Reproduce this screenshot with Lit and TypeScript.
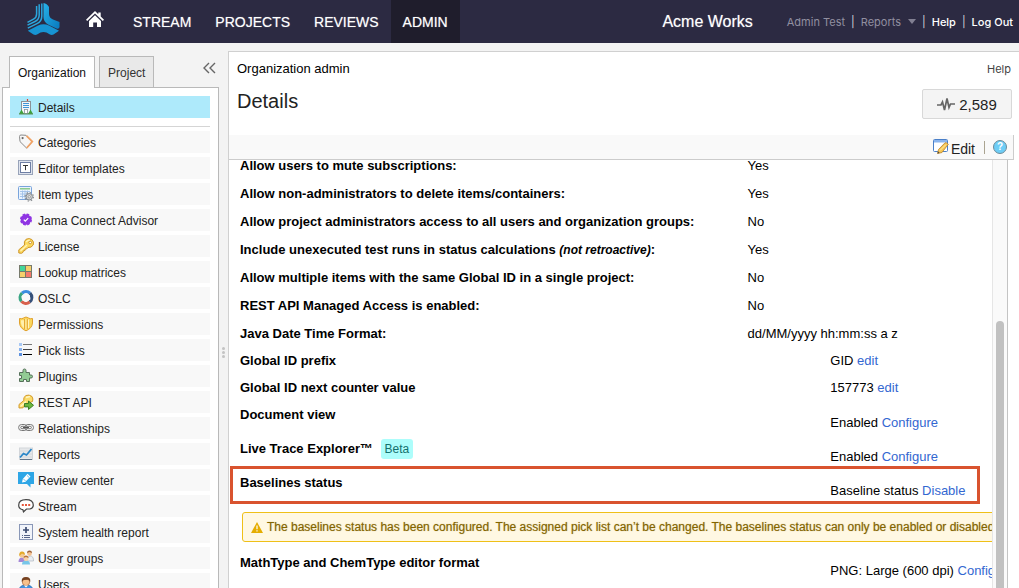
import { LitElement, html, svg, css, nothing } from "lit";
import type { SVGTemplateResult, TemplateResult } from "lit";
import { customElement, property, state } from "lit/decorators.js";
import { classMap } from "lit/directives/class-map.js";

const icons: Record<string, SVGTemplateResult> = {
  details: svg`
    <path d="M9.500 0v2" stroke="#e03c2c" stroke-width="1.200"/>
    <rect x="3.500" y="2.500" width="9" height="12" fill="#f4f6f8" stroke="#8b9299"/>
    <path d="M5 4.500h6M5 6.500h6M5 8.500h6" stroke="#3f95d8"/>
    <rect x="6.500" y="10.500" width="3" height="4" fill="#fff" stroke="#8b9299" stroke-width=".8"/>
    <path d="M1 15l2.500-4.500L6 15zM10 15l2.500-4.500L15 15z" fill="#3ea23c"/>
    <path d="M1 15h14" stroke="#5a8f57"/>`,
  categories: svg`
    <path d="M1.500 2.500Q1.500 1 3 1L8 1.300 14.300 7.600 8.700 14.200 2 7.600z" fill="#f7f7f7" stroke="#8c8c8c"/>
    <path d="M8.600 1.800L14.300 7.600 8.700 14" fill="none" stroke="#f0a366" stroke-width="1.800"/>
    <circle cx="4.600" cy="4.100" r="1.100" fill="#666"/>`,
  templates: svg`
    <rect x=".5" y=".5" width="14" height="14" fill="#dfe4ee" stroke="#98a3b9"/>
    <rect x="2.500" y="2.500" width="10" height="10" fill="#fff" stroke="#6f7fa4"/>
    <path d="M5 5.500h5M7.500 5v5.200" stroke="#333" stroke-width="1"/>`,
  types: svg`
    <rect x=".5" y=".5" width="13" height="13" rx="1" fill="#eaf3fd" stroke="#79a4dc"/>
    <path d="M2 2.800h10" stroke="#7cc47c" stroke-width="1.300"/>
    <path d="M2 5.500h10M2 8h10M2 10.500h10M4.500 4.500v8M7 4.500v8M9.500 4.500v8" stroke="#9fc0e8" stroke-width=".9"/>
    <circle cx="11.200" cy="10.800" r="3.200" fill="#d5d8db" stroke="#85898d"/>
    <circle cx="11.200" cy="10.800" r="4.200" fill="none" stroke="#85898d" stroke-width="1.200" stroke-dasharray="1.500 1.800"/>
    <circle cx="11.200" cy="10.800" r="1.200" fill="#fff" stroke="#777" stroke-width=".7"/>`,
  advisor: svg`
    <circle cx="8" cy="7.500" r="5.200" fill="#8f35e3"/>
    <circle cx="8" cy="7.500" r="5.200" fill="none" stroke="#8f35e3" stroke-width="1.700" stroke-dasharray="2.600 1.480"/>
    <path d="M5.800 7.700l1.500 1.500 2.900-3" fill="none" stroke="#fff" stroke-width="1.200"/>`,
  license: svg`
    <path d="M.8 15V11.800L6.500 7Q5.500 3.500 8 1.300 11 -.2 13.800 1.500 16.500 4 15.200 7 13.300 10 10 9.500L8.600 11 7.200 11 7 12.500 5.500 12.700 5 14.300 3.500 15.300z" fill="#fbd95e" stroke="#cf962a"/>
    <path d="M2.500 13L9 7M8.200 4Q9.500 2 12 2.200" fill="none" stroke="#fff3b8" stroke-width="1.300"/>
    <circle cx="12.200" cy="4.500" r="1.300" fill="#fff" stroke="#bd8420" stroke-width=".8"/>`,
  matrices: svg`
    <rect x="1" y="1" width="13" height="13" fill="#777a6c"/>
    <path d="M2 2h5v5H2z" fill="#42d69b"/><path d="M8 2h5v5h-5zM2 8h5v5H2z" fill="#f5d06b"/>
    <path d="M8 8h5v5h-5z" fill="#f47a6c"/>`,
  oslc: svg`
    <g fill="none" stroke-width="3.200">
    <path d="M4 3.200A6 6 0 0 1 12 3.200" stroke="#3b8de0"/>
    <path d="M12 3.200A6 6 0 0 1 11.600 12.100" stroke="#355079"/>
    <path d="M11.600 12.100A6 6 0 0 1 3.400 11.300" stroke="#d8604d"/>
    <path d="M3.400 11.300A6 6 0 0 1 4 3.200" stroke="#38a583"/></g>
    <path d="M8 3.200l3.700 2 .8 4L8.500 12l-4-1.500L3.500 6z" fill="#f9f9f9"/>`,
  permissions: svg`
    <path d="M1.500 2.500Q4 3.200 5.500 2L8 1l2.500 1Q12 3.200 14.500 2.500V7Q14 12.500 8 14.800 2 12.500 1.500 7z" fill="#fbd65b" stroke="#e0a12c"/>
    <path d="M3 4.200h3V12Q3 10 3 6z" fill="#fff0ae"/><path d="M8 3v10.500M10.500 3.500v8.500" stroke="#fff3bf"/>
    <path d="M9.300 3v10M6.500 3v10" stroke="#df9e2b" stroke-width=".8"/>`,
  lists: svg`
    <path d="M1 1h3v3H1z" fill="#a9c9f5"/><path d="M1 6h3v3H1z" fill="#86b1ef"/><path d="M1 11h3v3H1z" fill="#5d91e0"/>
    <path d="M5 2.500h9" stroke="#777"/><path d="M5 7.500h9" stroke="#444"/><path d="M5 12.500h9" stroke="#000"/>`,
  plugins: svg`
    <path d="M1.500 4.500H5V2.500Q5 1 6.500 1T8 2.500V4.500H11.500V7H13Q14.500 7 14.500 8.500T13 10H11.500V13.500H8.500V11.500H5.500V13.500H1.500V10.500H3.500V7.500H1.500z" fill="#92cc94" stroke="#56705a"/>`,
  rest: svg`
    <path d="M1 14V10.500L5.800 6.500Q5 3 8 1.500 11 .2 14 2.500 15.500 5 14.500 7.500L8 10 5 13.800z" fill="#fbdc6a" stroke="#d39a2c"/>
    <path d="M8 3.500l4-1M2.500 12.500L8 7.500" stroke="#fff5c4" stroke-width="1.300"/>
    <path d="M6.500 9.500h4V7l5 4.300-5 4.200v-2.600h-4z" fill="#6cb83d" stroke="#3c7d25"/>`,
  relations: svg`
    <g fill="none" stroke="#777"><rect x=".6" y="4.500" width="8.500" height="6" rx="3"/><rect x="7" y="4.500" width="8.500" height="6" rx="3"/>
    <rect x="2.700" y="6.300" width="4.500" height="2.400" rx="1.200"/><rect x="8.900" y="6.300" width="4.500" height="2.400" rx="1.200"/>
    <path d="M5 7.500h6" stroke="#555"/></g>`,
  reports: svg`
    <rect x="1.500" y="2" width="13" height="11.500" fill="#e6e8ea" stroke="#d2d5d9"/>
    <path d="M2 5h12M2 8h12M2 11h12" stroke="#d0d3d7" stroke-width=".8"/>
    <path d="M2 11.500l3.500-4L8.500 9 13.500 3" fill="none" stroke="#2a86c8" stroke-width="1.800"/>
    <path d="M2 13.500h12" stroke="#61758a"/>`,
  review: svg`
    <path d="M0 0h16v12h-3.500v3.500L9 12H0z" fill="#2ea6e6"/>
    <path d="M4 10.500l.8-3.500L9.500 1.800l3 2.700L7.500 9.800z" fill="#fff"/><path d="M5.500 7l2 2M9 3.500l2.200 2" stroke="#2ea6e6" stroke-width=".7"/>`,
  stream: svg`
    <path d="M4 11.500Q.7 10.500.7 7.200.7 1.700 8 1.700T15.300 7.200Q15.300 10 12 11H8.500L5.500 13.800 4.800 11.500z" fill="#fff" stroke="#444" stroke-width="1.200"/>
    <path d="M3.800 6h2v2h-2zM7 6h2v2H7zM10.200 6h2v2h-2z" fill="#e4573d"/>`,
  health: svg`
    <rect x="1.500" y=".5" width="13" height="15" fill="#f1f4fa" stroke="#8997b7"/>
    <path d="M8 3v6M5 6h6" stroke="#3d4c72" stroke-width="1.700"/>
    <path d="M4 11.500h1M6 11.500h6M4 13.500h1M6 13.500h6" stroke="#566488"/>`,
  groups: svg`
    <path d="M.5 12Q.5 7.500 4 7.500T7.500 12z" fill="#a487d6"/><circle cx="4" cy="5" r="2.600" fill="#f5c98f"/><path d="M1.300 6Q.8 1.500 4 1.500T6.800 5L4 3.500z" fill="#e3a928"/>
    <path d="M9 10Q9 6 12.300 6T15.500 11H9z" fill="#e8edf2" stroke="#a5adb5" stroke-width=".6"/><circle cx="11.500" cy="3.500" r="2.400" fill="#f3c191"/><path d="M9 3Q9 .5 11.500.5T14 3L11.500 2z" fill="#99623b"/>
    <path d="M4 14.500Q4 10.500 8 10.500T12 14.500z" fill="#78c6e8"/><circle cx="8" cy="8.500" r="2.500" fill="#f8d0a5"/><path d="M5.500 8Q5.500 5.500 8 5.500T10.500 8L8 7z" fill="#b5713a"/>`,
  users: svg`
    <path d="M1 15Q1 9 8 9T15 15z" fill="#3f93e0" stroke="#2669b5" stroke-width=".8"/>
    <circle cx="8" cy="6" r="3.700" fill="#f6c08b" stroke="#a8653a" stroke-width=".7"/>
    <path d="M3.800 6Q3 1 8 1T12.200 6L10.500 3.800 5.500 4z" fill="#75401f"/><path d="M6 9.500l2 2 2-2z" fill="#fff"/>`,
};

interface NavEntry { icon: string; label: string; }

const navEntries: NavEntry[] = [
  { icon: "categories", label: "Categories" },
  { icon: "templates", label: "Editor templates" },
  { icon: "types", label: "Item types" },
  { icon: "advisor", label: "Jama Connect Advisor" },
  { icon: "license", label: "License" },
  { icon: "matrices", label: "Lookup matrices" },
  { icon: "oslc", label: "OSLC" },
  { icon: "permissions", label: "Permissions" },
  { icon: "lists", label: "Pick lists" },
  { icon: "plugins", label: "Plugins" },
  { icon: "rest", label: "REST API" },
  { icon: "relations", label: "Relationships" },
  { icon: "reports", label: "Reports" },
  { icon: "review", label: "Review center" },
  { icon: "stream", label: "Stream" },
  { icon: "health", label: "System health report" },
  { icon: "groups", label: "User groups" },
  { icon: "users", label: "Users" },
];

@customElement("app-header")
class AppHeader extends LitElement {
  static styles = css`
    :host { display: block; flex: none; font-family: "Liberation Sans", Arial, sans-serif; }
    .bar { display: flex; align-items: center; height: 43px; padding: 0 6px 0 27px; background: #2c2a42; color: #fff; }
    a { color: inherit; text-decoration: none; }
    .logo, .home { display: block; flex: none; }
    .home { margin: 0 17px 0 26px; }
    .menu { display: flex; align-self: stretch; }
    .menu a { display: flex; align-items: center; padding: 0 12px; font-size: 14px; text-shadow: 0 0 1px #ffffff80; }
    .menu .active { background: #1f1d2c; }
    .org { margin-left: auto; font-size: 16px; text-shadow: 0 0 1px #ffffff80; white-space: nowrap; }
    .user { display: flex; align-items: center; gap: 6px; margin-left: 34px; font: 11px Inter, sans-serif; white-space: nowrap; }
    .muted { color: #918fa0; }
    .sep { color: #d5d4dc; }
    .reports { display: flex; align-items: center; gap: 7px; padding: 0; border: 0; background: none; font: inherit; }
    .strong { font-weight: 500; }
  `;

  render() {
    return html`<header class="bar">
      <a class="logo" href="#" aria-label="Jama home">
        <svg width="33" height="33" viewBox="0 0 33 33">
          <defs><linearGradient id="g" x1="0" y1="0" x2="1" y2="1"><stop offset="0" stop-color="#27b2e8"/><stop offset="1" stop-color="#0878bd"/></linearGradient></defs>
          <path d="M16.500 0Q20 .5 22 4V11Q22.200 15 26 16.500L32.500 19V24Q32 26.500 29.500 25.500L21 21.500Q16.500 19 16.500 14z" fill="url(#g)"/>
          <g fill="none" stroke="#2ba6dc" stroke-width="1.500">
            <path d="M14.800 .5V13Q14.800 18.500 10 20.600L.8 25.200"/>
            <path d="M12.200 1.300V12Q12.200 16.500 8 18.500L.5 22.200"/>
            <path d="M9.600 3V11Q9.600 14.500 6.500 16.200L.5 19.400"/>
          </g>
          <path d="M.8 27.800L11 22.500Q16.500 20 22 22.500L32 27.800 26.500 31.500Q24.500 32.500 22.500 31.200 16.500 27 10.500 31.200 8.500 32.500 6.500 31.500z" fill="#1794d3"/>
        </svg>
      </a>
      <a class="home" href="#" aria-label="Home">
        <svg width="18" height="17" viewBox="0 0 18 17" fill="#fff"><path d="M9 0l3.300 3.200V1.500h2.400V5.500L18 8.700l-1.200 1.300L9 2.600 1.200 10 0 8.700z"/><path d="M9 4.200l6 5.800v6h-4v-4.500H7.200V16H3v-6z"/></svg>
      </a>
      <nav class="menu">
        <a href="#">STREAM</a><a href="#">PROJECTS</a><a href="#">REVIEWS</a><a href="#" class="active" aria-current="page">ADMIN</a>
      </nav>
      <span class="org">Acme Works</span>
      <div class="user">
        <a class="muted" href="#">Admin Test</a><span class="sep">|</span>
        <button class="reports muted">Reports <svg width="8" height="5" viewBox="0 0 8 5"><path d="M0 0h8L4 5z" fill="#817f92"/></svg></button>
        <span class="sep">|</span><a class="strong" href="#">Help</a><span class="sep">|</span><a class="strong" href="#">Log Out</a>
      </div>
    </header>`;
  }
}

@customElement("admin-sidebar")
class AdminSidebar extends LitElement {
  @state() private selected = "Details";

  static styles = css`
    :host { display: flex; flex-direction: column; flex: none; width: 217px; padding: 13px 0 0 2px; box-sizing: content-box; font: 12px "Liberation Sans", Arial, sans-serif; }
    .tabs { display: flex; gap: 4px; padding-left: 7px; position: relative; z-index: 1; }
    .tab { height: 31px; padding: 2px 8px 0; border: 1px solid #b9b9b9; border-bottom: 0; background: #e9e9e9; color: #333; font: inherit; }
    .tab.on { height: 32px; margin-bottom: -1px; padding-top: 0; background: #fff; color: #111; }
    .collapse { width: 14px; height: 14px; margin: 5px 3px 0 auto; padding: 0; border: 0; background: none; line-height: 0; }
    .panel { flex: 1; padding: 8px 8px 0 7px; border: 1px solid #b9b9b9; background: #fff; }
    .item { display: flex; align-items: center; gap: 4px; height: 22px; padding-left: 8px; margin-bottom: 4px; background: #f8f8f8; color: #222; text-decoration: none; }
    .item.on { margin-bottom: 8px; background: #aeeafb; }
    .item svg { flex: none; }
    .text { padding-top: 2px; }
    .rule { height: 1px; margin: 0 0 4px; border: 0; background: #d5d5d5; }
  `;

  private item(e: NavEntry) {
    return html`<a href="#" class=${classMap({ item: true, on: e.label === this.selected })}>
      <svg width="16" height="16" viewBox="0 0 16 16">${icons[e.icon]}</svg><span class="text">${e.label}</span></a>`;
  }

  render() {
    return html`
      <div class="tabs">
        <button class="tab on">Organization</button><button class="tab">Project</button>
        <button class="collapse" aria-label="Collapse panel"><svg width="13" height="12" viewBox="0 0 13 12"><path d="M6 1L1 6l5 5M12 1L7 6l5 5" fill="none" stroke="#666" stroke-width="1.400"/></svg></button>
      </div>
      <nav class="panel">
        ${this.item({ icon: "details", label: "Details" })}
        <hr class="rule" />
        <div class="list">${navEntries.map((e) => this.item(e))}</div>
      </nav>`;
  }
}

@customElement("setting-row")
class SettingRow extends LitElement {
  @property() label = "";
  @property() note = "";
  @property() value = "";
  @property() action = "";
  @property() badge = "";
  @property({ reflect: true }) kind = "plain";
  @property({ type: Boolean, reflect: true }) marked = false;

  static styles = css`
    :host { display: flex; position: relative; box-sizing: border-box; height: 28px; padding-left: 11px; align-items: center; line-height: 20px; white-space: nowrap; }
    :host([kind="inline"]) { height: 27px; padding-bottom: 2px; }
    :host([kind="staggered"]) { height: 34px; align-items: flex-start; }
    .label { flex: 0 0 67.5%; font-weight: bold; }
    :host(:not([kind="plain"])) .label { flex-basis: 78.5%; }
    :host([kind="staggered"]) .label { padding-top: 3px; }
    :host([kind="staggered"]) .value { padding-top: 11px; }
    .note { font-size: 12px; }
    a { color: #3367d1; text-decoration: none; }
    .badge { display: inline-block; margin-left: 4px; padding: 0 4px; border-radius: 3px; background: #adfdfb; color: #14706d; font-size: 12px; font-weight: normal; }
    :host([marked])::after { content: ""; position: absolute; inset: -4px 12px 0 1px; border: 3px solid #d9532f; box-sizing: border-box; pointer-events: none; }
  `;

  render() {
    return html`<div class="label">${this.label}${this.note ? html` <i class="note">(${this.note})</i>:` : nothing}
        ${this.badge ? html`<span class="badge">${this.badge}</span>` : nothing}</div>
      <div class="value">${this.value} ${this.action ? html`<a href="#">${this.action}</a>` : nothing}</div>`;
  }
}

@customElement("details-panel")
class DetailsPanel extends LitElement {
  static styles = css`
    :host { display: flex; flex-direction: column; flex: 1; min-width: 0; min-height: 0; margin-top: 8px; border: 1px solid #d0d0d0; border-width: 1px 0 0 1px; background: #fff; font: 13px "Liberation Sans", Arial, sans-serif; color: #000; }
    a { text-decoration: none; }
    .top { display: flex; justify-content: space-between; height: 83px; padding: 0 7px 0 8px; }
    .crumb { padding-top: 7px; line-height: 20px; }
    h1 { margin: 10px 0 0; font-size: 20px; font-weight: normal; line-height: 24px; color: #222; }
    .side { display: flex; flex-direction: column; align-items: flex-end; padding-top: 10px; }
    .help { font: 11px/14px Inter, sans-serif; color: #444; padding-right: 1px; }
    .activity { display: flex; align-items: center; justify-content: center; gap: 4px; width: 90px; height: 30px; margin-top: 13px; padding: 0; border: 1px solid #d8d8d8; border-radius: 2px; background: #f4f4f4; color: #222; font: 15px "Liberation Sans", Arial, sans-serif; }
    .tools { display: flex; align-items: center; justify-content: flex-end; height: 24px; margin-right: 5px; padding-right: 6px; border: 1px solid #ccc; border-width: 0 1px 1px 0; background: #f9f9f9; }
    .edit { display: flex; align-items: center; gap: 2px; padding: 0; border: 0; background: none; font: 14px "Liberation Sans", Arial, sans-serif; color: #222; }
    .word { padding-top: 3px; }
    .bar { width: 1px; height: 13px; margin: 0 8px 0 9px; background: #aaa491; }
    .round { width: 14px; height: 14px; padding: 0; border: 1px solid #6d8b99; border-radius: 50%; background: #6dcdf6; color: #fff; font: bold 10px/12px "Liberation Sans", sans-serif; }
    .body { display: flex; flex: 1; min-height: 0; margin-right: 11px; border-right: 1px solid #c4c4c4; }
    .scroll { flex: 1; min-width: 0; overflow: hidden; }
    .rows { margin-top: -8px; }
    .track { display: flex; justify-content: center; width: 14px; border-left: 1px solid #e6e6e6; background: #fafafa; }
    .thumb { width: 8px; margin-top: 161px; border-radius: 4px 4px 0 0; background: #c1c1c1; }
    .warning { display: flex; align-items: center; gap: 4px; height: 28px; width: max-content; margin: 8px 0 8px 13px; padding: 0 8px; border: 1px solid #efc018; border-radius: 3px; background: #fff8e3; color: #846500; font-size: 12px; text-shadow: 0 0 1px #84650080; }
  `;

  private plain(label: string, value: string, note = ""): TemplateResult {
    return html`<setting-row .label=${label} .value=${value} .note=${note}></setting-row>`;
  }

  render() {
    return html`
      <div class="top">
        <div><div class="crumb">Organization admin</div><h1>Details</h1></div>
        <div class="side">
          <a class="help" href="#">Help</a>
          <button class="activity"><svg width="18" height="15" viewBox="0 0 18 15"><path d="M0 8h4l1.500-3 2 8L10 1.500l2 9L13.500 7H18" fill="none" stroke="#666" stroke-width="1.700"/></svg>2,589</button>
        </div>
      </div>
      <div class="tools">
        <button class="edit"><svg width="16" height="16" viewBox="0 0 16 16"><rect x=".5" y=".5" width="14" height="12" rx="1" fill="#fff" stroke="#4a7fc8"/><path d="M1 1h13v2.500H1z" fill="#8ab5ee"/><path d="M4.500 14.500l1-4L12 3.800q2-.5 3.300 1.500L9 13.500z" fill="#f6c552" stroke="#b7822b" stroke-width=".8"/><path d="M7 11.500l6-6" stroke="#fff0ad"/><path d="M4.500 14.500l.6-2 1.500 1.400z" fill="#444"/></svg><span class="word">Edit</span></button>
        <span class="bar"></span>
        <button class="round" aria-label="Page help">?</button>
      </div>
      <div class="body">
        <div class="scroll"><div class="rows">
          ${this.plain("Allow users to mute subscriptions:", "Yes")}
          ${this.plain("Allow non-administrators to delete items/containers:", "Yes")}
          ${this.plain("Allow project administrators access to all users and organization groups:", "No")}
          ${this.plain("Include unexecuted test runs in status calculations", "Yes", "not retroactive")}
          ${this.plain("Allow multiple items with the same Global ID in a single project:", "No")}
          ${this.plain("REST API Managed Access is enabled:", "No")}
          ${this.plain("Java Date Time Format:", "dd/MM/yyyy hh:mm:ss a z")}
          <setting-row kind="inline" label="Global ID prefix" value="GID" action="edit"></setting-row>
          <setting-row kind="inline" label="Global ID next counter value" value="157773" action="edit"></setting-row>
          <setting-row kind="staggered" label="Document view" value="Enabled" action="Configure"></setting-row>
          <setting-row kind="staggered" label="Live Trace Explorer™" badge="Beta" value="Enabled" action="Configure"></setting-row>
          <setting-row kind="staggered" marked label="Baselines status" value="Baseline status" action="Disable"></setting-row>
          <div class="warning" role="note"><svg width="12" height="11" viewBox="0 0 12 11"><path d="M6 0l6 11H0z" fill="#e5ad00"/><path d="M6 3.500v3.700M6 8.300v1.300" stroke="#fff" stroke-width="1.200"/></svg>The baselines status has been configured. The assigned pick list can’t be changed. The baselines status can only be enabled or disabled.</div>
          <setting-row kind="staggered" label="MathType and ChemType editor format" value="PNG: Large (600 dpi)" action="Configure"></setting-row>
        </div></div>
        <div class="track"><div class="thumb"></div></div>
      </div>`;
  }
}

@customElement("app-root")
class AppRoot extends LitElement {
  static styles = css`
    :host { display: flex; flex-direction: column; height: 100vh; overflow: hidden; background: #f3f3f3; }
    .main { display: flex; flex: 1; min-height: 0; }
    .split { display: flex; flex-direction: column; align-items: center; justify-content: center; gap: 1px; width: 9px; padding-top: 74px; box-sizing: border-box; }
    .dot { width: 3px; height: 3px; border-radius: 50%; background: #c3c3c3; }
  `;

  render() {
    return html`<app-header></app-header>
      <div class="main">
        <admin-sidebar></admin-sidebar>
        <div class="split"><span class="dot"></span><span class="dot"></span><span class="dot"></span></div>
        <details-panel></details-panel>
      </div>`;
  }
}
